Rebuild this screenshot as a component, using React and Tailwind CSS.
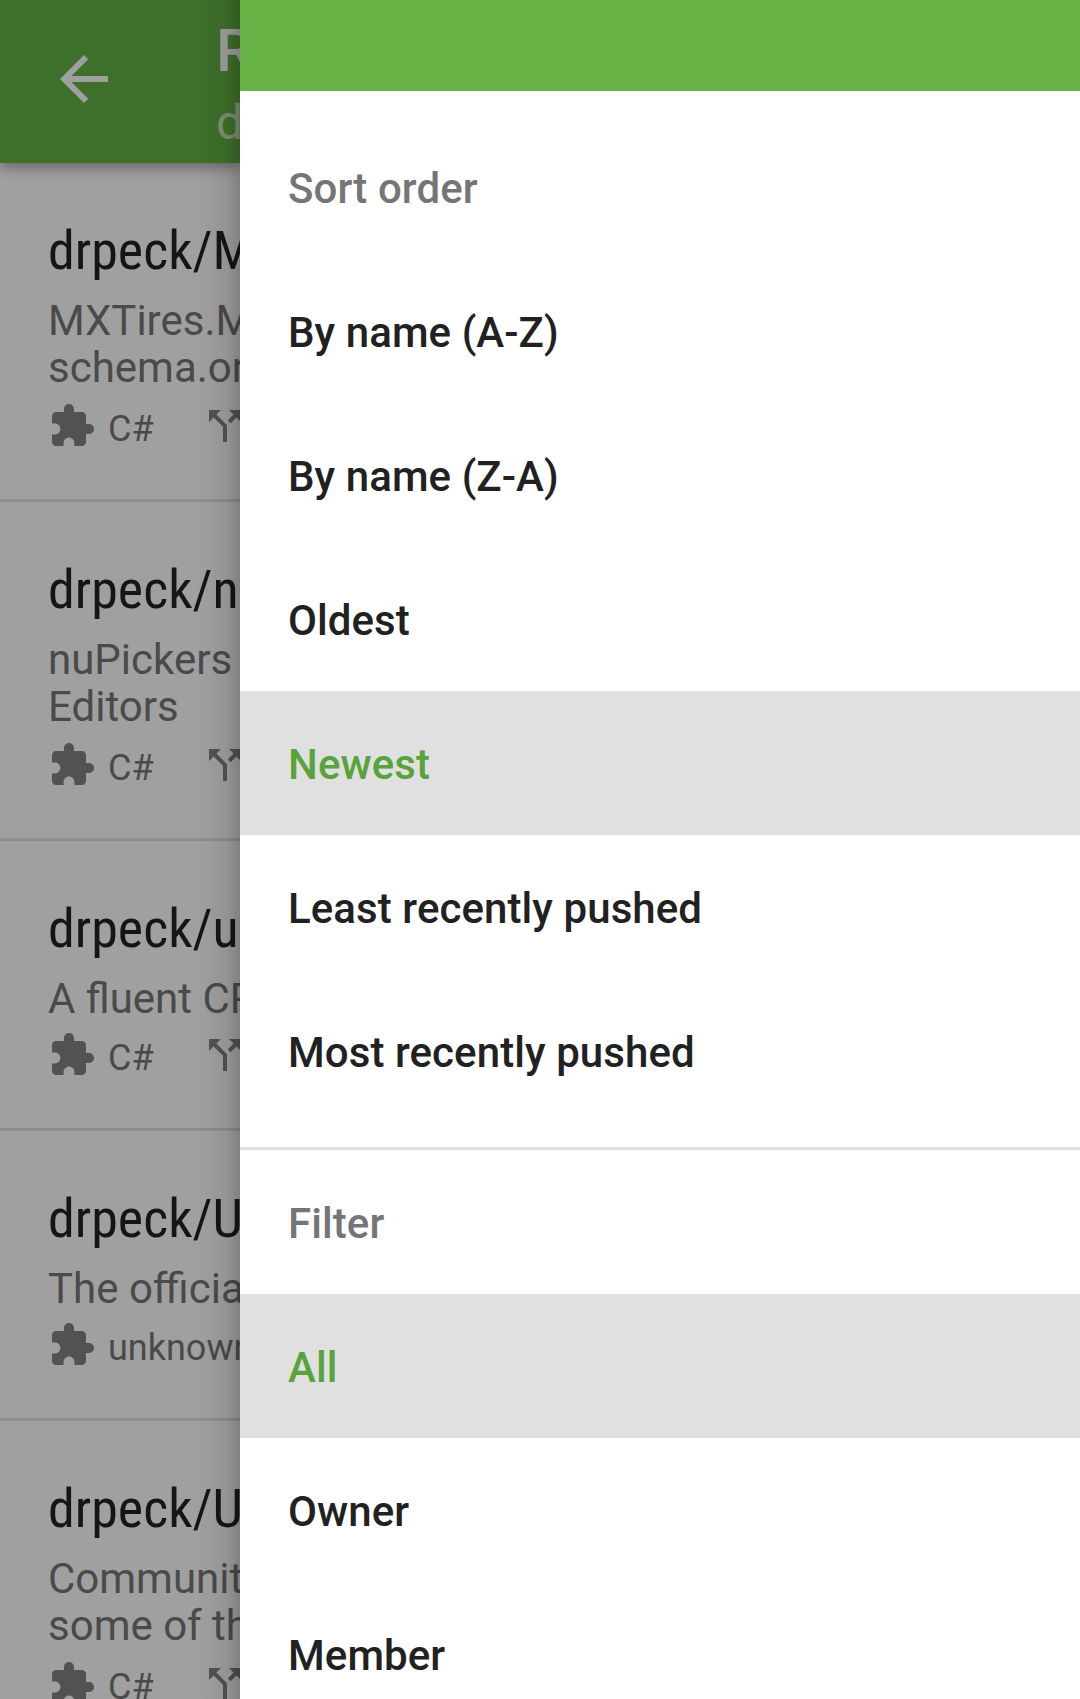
const ICONS = {
  back: "M20 11H7.83l5.59-5.59L12 4l-8 8 8 8 1.41-1.41L7.83 13H20v-2z",
  extension:
    "M20.5 11H19V7c0-1.1-.9-2-2-2h-4V3.5C13 2.12 11.88 1 10.5 1S8 2.12 8 3.5V5H4c-1.1 0-1.99.9-1.99 2v3.8H3.5c1.49 0 2.7 1.21 2.7 2.7s-1.21 2.7-2.7 2.7H2V20c0 1.1.9 2 2 2h3.8v-1.5c0-1.49 1.21-2.7 2.7-2.7 1.49 0 2.7 1.21 2.7 2.7V22H17c1.1 0 2-.9 2-2v-4h1.5c1.38 0 2.5-1.12 2.5-2.5S21.88 11 20.5 11z",
  split:
    "M14 4l2.29 2.29-2.88 2.88 1.42 1.42 2.88-2.88L20 10V4zm-4 0H4v6l2.29-2.29 4.71 4.7V20h2v-8.41l-5.29-5.3z",
};

function Icon({ name, className }) {
  return (
    <svg viewBox="0 0 24 24" fill="currentColor" className={className}>
      <path d={ICONS[name]} />
    </svg>
  );
}

const REPOS = [
  { title: "drpeck/M", lines: ["MXTires.M", "schema.or"], language: "C#", forks: true },
  { title: "drpeck/n", lines: ["nuPickers", "Editors"], language: "C#", forks: true },
  { title: "drpeck/u", lines: ["A fluent CP"], language: "C#", forks: true },
  { title: "drpeck/U", lines: ["The officia"], language: "unknown", forks: false },
  { title: "drpeck/U", lines: ["Communit", "some of th"], language: "C#", forks: true },
];

const SORT = [
  { label: "By name (A-Z)" },
  { label: "By name (Z-A)" },
  { label: "Oldest" },
  { label: "Newest", selected: true },
  { label: "Least recently pushed" },
  { label: "Most recently pushed" },
];

const FILTER = [{ label: "All", selected: true }, { label: "Owner" }, { label: "Member" }];

function Repo({ repo }) {
  return (
    <li className="shrink-0 border-b-[3px] border-[#8e8e8e] pt-14 pb-[43px] pl-12">
      <h2 className="h-[70px] text-[54px] leading-[64px] text-[#151515] [font-family:'Roboto_Condensed',Roboto,sans-serif] [font-stretch:75%]">
        {repo.title}
      </h2>
      <div
        className={
          repo.lines.length > 1
            ? "mt-2 mb-[11px] text-[42px] leading-[47px] text-[#4a4a4a]"
            : "mt-2 mb-[9px] text-[42px] leading-[47px] text-[#4a4a4a]"
        }
      >
        {repo.lines.map((line) => (
          <p key={line}>{line}</p>
        ))}
      </div>
      <div className="flex h-[54px] items-start text-[36px] leading-[54px] text-[#4a4a4a]">
        <div className="flex w-[153px] shrink-0">
          <Icon name="extension" className="size-12 shrink-0 text-[#525252]" />
          <span className="ml-3">{repo.language}</span>
        </div>
        {repo.forks && <Icon name="split" className="size-12 shrink-0 text-[#525252]" />}
      </div>
    </li>
  );
}

function MenuItem({ item }) {
  return (
    <li
      className={
        item.selected
          ? "flex h-36 shrink-0 items-center bg-[#e0e0e0] px-12 pt-1 text-[#5aa33c]"
          : "flex h-36 shrink-0 items-center px-12 pt-1 text-[#212121]"
      }
    >
      {item.label}
    </li>
  );
}

export default function App() {
  return (
    <div className="flex h-[1699px] w-[1080px] overflow-hidden bg-[#a0a0a0] [font-family:Roboto,sans-serif]">
      <div className="relative flex w-60 shrink-0 flex-col overflow-hidden whitespace-nowrap">
        <header className="relative z-10 flex h-[163px] shrink-0 bg-[#3f702b] shadow-[0_5px_12px_rgba(0,0,0,0.34)]">
          <Icon name="back" className="mt-[43px] ml-12 size-[72px] shrink-0 text-[#9f9f9f]" />
          <div className="ml-24 pt-[15px]">
            <h1 className="text-[60px] leading-[72px] font-medium text-[#a0a0a0]">R</h1>
            <p className="mt-[7px] text-[48px] leading-[58px] text-[#7c9473]">d</p>
          </div>
        </header>
        <ul className="flex flex-col">
          {REPOS.map((repo, i) => (
            <Repo key={i} repo={repo} />
          ))}
        </ul>
        <div className="absolute inset-y-0 right-0 z-20 w-[45px] bg-[linear-gradient(to_right,transparent,rgba(0,0,0,0.03)_35%,rgba(0,0,0,0.08)_70%,rgba(0,0,0,0.2))]" />
      </div>

      <aside className="flex min-w-0 flex-1 flex-col bg-white text-[42px] leading-[50px] font-medium tracking-[0.08px]">
        <div className="h-[91px] shrink-0 bg-[#66b245]" />
        <h3 className="mt-6 flex h-36 shrink-0 items-center px-12 pt-1 text-[#757575]">Sort order</h3>
        <ul className="flex flex-col">
          {SORT.map((item) => (
            <MenuItem key={item.label} item={item} />
          ))}
        </ul>
        <hr className="mt-6 h-[3px] shrink-0 border-0 bg-[#e0e0e0]" />
        <h3 className="flex h-36 shrink-0 items-center px-12 pt-1 text-[#757575]">Filter</h3>
        <ul className="flex flex-col">
          {FILTER.map((item) => (
            <MenuItem key={item.label} item={item} />
          ))}
        </ul>
      </aside>
    </div>
  );
}
